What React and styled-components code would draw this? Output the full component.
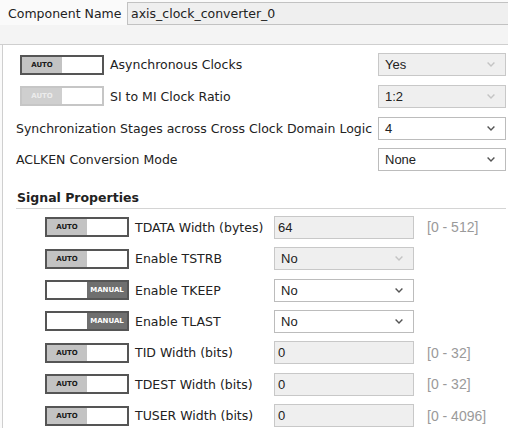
import React from 'react';
import styled, { createGlobalStyle } from 'styled-components';

const GlobalStyle = createGlobalStyle`
  body {
    margin: 0;
    background: #fff;
    font-family: "DejaVu Sans", sans-serif;
    font-size: 12.5px;
    color: #222;
    overflow: hidden;
  }
`;

const Page = styled.div`
  width: 508px;
  height: 428px;
  overflow: hidden;
  display: flex;
  flex-direction: column;
  background: #fafafa;
`;

const NameBar = styled.div`
  flex: none;
  display: flex;
  align-items: center;
  height: 25px;
  padding: 2px 0 0 8px;
  box-sizing: border-box;
`;

const NameLabel = styled.span`
  width: 119px;
  flex: none;
`;

const NameInput = styled.div`
  flex: 1;
  height: 23px;
  box-sizing: border-box;
  border: 1px solid #c2c2c2;
  border-right: none;
  background: #efefef;
  display: flex;
  align-items: center;
  padding-left: 3px;
`;

const Band = styled.div`
  flex: none;
  height: 19px;
  background: #f4f4f4;
  border-bottom: 1px solid #cfcfcf;
`;

const Panel = styled.div`
  flex: 1;
  min-height: 0;
  margin-left: 2px;
  border-left: 1px solid #cfcfcf;
  background: #fff;
  padding: 4px 2px 0 13px;
`;

const Row = styled.div`
  display: flex;
  align-items: center;
  height: 31.67px;
`;

const RowLabel = styled.span`
  margin-left: ${p => (p.$afterToggle ? '6px' : '0')};
  white-space: nowrap;
`;

const ToggleBox = styled.div`
  flex: none;
  width: 84px;
  height: 20px;
  margin-left: ${p => p.$indent || 0}px;
  box-sizing: border-box;
  border: 2px solid ${p => (p.$disabled ? '#c6c6c6' : '#555')};
  background: #fff;
  display: flex;
  flex-direction: ${p => (p.$manual ? 'row-reverse' : 'row')};
`;

const ToggleSeg = styled.div`
  width: 40px;
  display: flex;
  align-items: center;
  justify-content: center;
  font-size: 7px;
  font-weight: bold;
  background: ${p => (p.$manual ? '#6f6f6f' : p.$disabled ? '#cfcfcf' : '#c3c3c3')};
  color: ${p => (p.$manual ? '#fff' : p.$disabled ? '#ececec' : '#1a1a1a')};
`;

const Field = styled.div`
  flex: none;
  width: ${p => p.$width}px;
  height: 23px;
  margin-left: ${p => (p.$push ? 'auto' : '0')};
  box-sizing: border-box;
  border: 1px solid ${p => (p.$disabled ? '#c8c8c8' : '#bcbcbc')};
  background: ${p => (p.$disabled ? '#efefef' : '#fff')};
  display: flex;
  align-items: center;
  justify-content: space-between;
  padding: ${p => (p.$select ? '0 10px 0 6px' : '0 0 0 3px')};
  font-family: "Liberation Sans", Arial, sans-serif;
  font-size: 13px;
  color: #222;
`;

const Heading = styled.div`
  padding: 14px 0 2px 1px;
  line-height: 16px;
  font-weight: bold;
  border-bottom: 1px solid #d4d4d4;
`;

const SignalList = styled.div`
  padding-top: 3px;
`;

const SignalRow = styled.div`
  display: grid;
  grid-template-columns: 84px 145px 140px auto;
  align-items: center;
  height: 31.4px;
  padding-left: 29px;
`;

const SignalLabel = styled.span`
  padding-left: 6px;
  white-space: nowrap;
`;

const Range = styled.span`
  padding-left: 13px;
  font-family: "Liberation Sans", Arial, sans-serif;
  font-size: 14px;
  color: #9a9a9a;
`;

const Chevron = ({ disabled }) => (
  <svg width="8" height="5" viewBox="0 0 8 5">
    <polyline
      points="0.6,0.6 4,4 7.4,0.6"
      fill="none"
      stroke={disabled ? '#c4c4c4' : '#555'}
      strokeWidth="1.4"
    />
  </svg>
);

const Toggle = ({ mode = 'auto', disabled, indent }) => {
  const manual = mode === 'manual';
  return (
    <ToggleBox $manual={manual} $disabled={disabled} $indent={indent}>
      <ToggleSeg $manual={manual} $disabled={disabled}>
        {manual ? 'MANUAL' : 'AUTO'}
      </ToggleSeg>
    </ToggleBox>
  );
};

const Select = ({ value, disabled, width, push }) => (
  <Field $select $disabled={disabled} $width={width} $push={push}>
    <span>{value}</span>
    <Chevron disabled={disabled} />
  </Field>
);

const topRows = [
  { label: 'Asynchronous Clocks', toggle: true, value: 'Yes', disabled: true },
  { label: 'SI to MI Clock Ratio', toggle: true, toggleDisabled: true, value: '1:2', disabled: true },
  { label: 'Synchronization Stages across Cross Clock Domain Logic', value: '4' },
  { label: 'ACLKEN Conversion Mode', value: 'None' },
];

const signals = [
  { label: 'TDATA Width (bytes)', kind: 'input', value: '64', range: '[0 - 512]' },
  { label: 'Enable TSTRB', kind: 'select', value: 'No', disabled: true },
  { label: 'Enable TKEEP', kind: 'select', value: 'No', mode: 'manual' },
  { label: 'Enable TLAST', kind: 'select', value: 'No', mode: 'manual' },
  { label: 'TID Width (bits)', kind: 'input', value: '0', range: '[0 - 32]' },
  { label: 'TDEST Width (bits)', kind: 'input', value: '0', range: '[0 - 32]' },
  { label: 'TUSER Width (bits)', kind: 'input', value: '0', range: '[0 - 4096]' },
];

export default function App() {
  return (
    <>
      <GlobalStyle />
      <Page>
        <NameBar>
          <NameLabel>Component Name</NameLabel>
          <NameInput>axis_clock_converter_0</NameInput>
        </NameBar>
        <Band />
        <Panel>
          {topRows.map(r => (
            <Row key={r.label}>
              {r.toggle && <Toggle indent={4} disabled={r.toggleDisabled} />}
              <RowLabel $afterToggle={r.toggle}>{r.label}</RowLabel>
              <Select value={r.value} disabled={r.disabled} width={128} push />
            </Row>
          ))}
          <Heading>Signal Properties</Heading>
          <SignalList>
            {signals.map(s => (
              <SignalRow key={s.label}>
                <Toggle mode={s.mode} />
                <SignalLabel>{s.label}</SignalLabel>
                {s.kind === 'select' ? (
                  <Select value={s.value} disabled={s.disabled} width={140} />
                ) : (
                  <Field $disabled $width={140}>{s.value}</Field>
                )}
                {s.range ? <Range>{s.range}</Range> : <span />}
              </SignalRow>
            ))}
          </SignalList>
        </Panel>
      </Page>
    </>
  );
}
